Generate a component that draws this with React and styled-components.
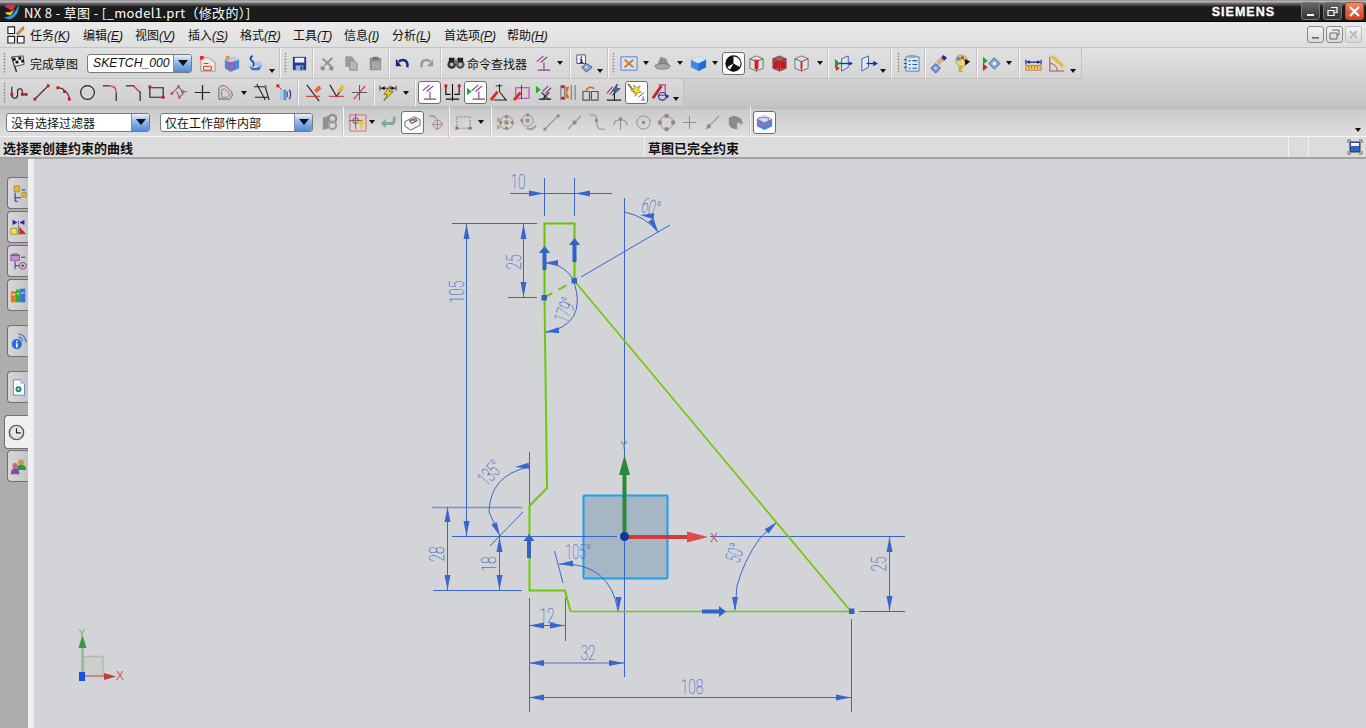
import React from 'react';
import styled, { createGlobalStyle } from 'styled-components';

const Global = createGlobalStyle`
  html, body { margin: 0; padding: 0; height: 100%; overflow: hidden; background: #d2d4d8; }
  #root { height: 100%; }
`;
const CJK = `"Noto Sans CJK SC", "Liberation Sans", sans-serif`;

/* ---------- icon drawing helpers ---------- */
const Ln = ({ d, c = '#222', w = 1, dash }) => <path d={d} stroke={c} strokeWidth={w} fill="none" strokeDasharray={dash} />;
const Fl = ({ d, c, s }) => <path d={d} fill={c} stroke={s || 'none'} strokeWidth={s ? 0.8 : 0} />;
const Dt = ({ x, y, c = '#d01818', r = 1.5 }) => <rect x={x - r} y={y - r} width={r * 2} height={r * 2} fill={c} />;
const G = '#8f8f8f';
const P = '#8a3f8f';

const Perp = ({ x = 0, y = 0, c = P }) => (
  <g transform={`translate(${x} ${y})`}>
    <Ln d="M3 8 L10 2 M7 9 L14 3" c={c} w={1.3} />
    <Ln d="M4 17 H17 M10.5 17 V9" c={c} w={1.2} />
  </g>
);
const Wire = ({ fill = '#e0e0e0', c = '#555', red }) => (
  <g>
    <Fl d="M10 2 L17 5 V15 L10 18 L3 15 V5 Z" c={fill} s={c} />
    <Ln d="M3 5 L10 8 L17 5 M10 8 V18" c={c} />
    {red}
  </g>
);

const icons = {
  flag: <g><Ln d="M5 3 L10 19" c="#223" w={1.4} /><Fl d="M5 3 L17 2 L18 11 L8 13 Z" c="#eee" s="#222" /><Fl d="M6 4h3v3h-3z M12 3h3v3h-3z M9 7h3v3h-3z M15 6h3v3h-3z" c="#111" /></g>,
  sheet: <g><Fl d="M3 4 L11 4 L18 9 V18 H3 Z" c="#f2e8e2" s="#b07070" /><Ln d="M6 13h8v4h-8z M6 10h5" c="#d03030" /><Dt x={4} y={4} c="#e03020" r={2} /></g>,
  box: <g><Fl d="M3 6 L12 3 L18 6 V15 L9 19 L3 15 Z" c="#3f8fe0" /><Fl d="M3 6 L12 3 L18 6 L9 9 Z" c="#a9d4f8" /><Ln d="M7 9h6v6h-6z" c="#e24070" /><Dt x={6} y={4} c="#f09020" r={2} /></g>,
  dish: <g><Fl d="M3 12 Q10 18 17 11 L14 17 H6 Z" c="#2f78c8" /><Ln d="M7 2 Q3 4 6 7 Q10 10 7 13" c="#1b4fa0" w={2} /><Fl d="M9 8 h7 v5 h-7z" c="#9ec8ee" /></g>,
  save: <g><Fl d="M3 3 H17 V17 H3 Z" c="#1c3f92" /><Fl d="M5 4 H15 V9 H5 Z" c="#eef3ff" /><Fl d="M6 12 H14 V17 H6 Z" c="#9cb0d8" /><Fl d="M11 13h2v4h-2z" c="#1c3f92" /></g>,
  cut: <g><Ln d="M5 5 L14 13 M15 4 L7 12" c={G} w={2} /><circle cx="5" cy="15" r="2.4" fill={G} /><circle cx="14" cy="15" r="2.4" fill={G} /></g>,
  copy: <g><Fl d="M4 3 H10 L12 5 V13 H4 Z" c="#a0a0a0" s="#8b8b8b" /><Fl d="M8 7 H13 L16 10 V17 H8 Z" c="#b5b5b5" s="#808080" /></g>,
  paste: <g><Fl d="M4 4 H16 V17 H4 Z" c="#8e8e8e" /><Fl d="M7 3 H13 V6 H7 Z" c="#6f6f6f" /><Fl d="M6 8 H15 V16 H6 Z" c="#a8a8a8" /></g>,
  undo: <g><Ln d="M6 8 Q10 5 13 7 Q16 9 15 14" c="#12287a" w={2.6} /><Fl d="M3 5 L9 13 L3 13 Z" c="#12287a" /></g>,
  redo: <g><Ln d="M14 8 Q10 5 7 7 Q4 9 5 14" c="#9a9a9a" w={2.6} /><Fl d="M17 5 L11 13 L17 13 Z" c="#9a9a9a" /></g>,
  binoc: <g><circle cx="6" cy="11" r="4.5" fill="#333" /><circle cx="15" cy="11" r="4.5" fill="#555" /><Fl d="M3 4h6v5h-6z M12 4h6v5h-6z" c="#222" /><Dt x={10.5} y={8} c="#777" r={2} /><circle cx="6" cy="11" r="2" fill="#bbb" /><circle cx="15" cy="11" r="2" fill="#bbb" /></g>,
  perp: <Perp />,
  info: <g><Fl d="M2 1 H11 V10 H2 Z" c="#fff" s="#224" /><Fl d="M6 2.5h1.6v1.6H6z M5 5h2.6v3.4h1v1H5v-1h1V6H5z" c="#14147a" /><Fl d="M12 10 L18 14 L12 19 L7 14 Z" c="#88a8e0" s="#335" /><Fl d="M11 13h2v2h-2z" c="#eee" /></g>,
  fit: <g><Fl d="M2 3 H19 V17 H2 Z" c="#d3e3f8" s="#3a66c8" /><Ln d="M6 6 L15 14 M15 6 L6 14" c="#e07818" w={2} /></g>,
  lamp: <g><Fl d="M8 3 L14 5 L17 12 L4 13 Z" c="#8e8e8e" /><Fl d="M2 12 Q10 8 18 12 Q18 16 10 16 Q2 16 2 12 Z" c="#a9a9a9" s="#707070" /></g>,
  cube: <g><Fl d="M2 6 L10 2 L18 6 V14 L10 18 L2 14 Z" c="#3a8ee6" /><Fl d="M2 6 L10 2 L18 6 L10 10 Z" c="#d5e8fb" /><Fl d="M10 10 L18 6 V14 L10 18 Z" c="#1e6fc8" /></g>,
  shade: <g><circle cx="10" cy="10" r="8" fill="#fff" stroke="#111" strokeWidth="1.2" /><Fl d="M10 2 A8 8 0 0 0 3 14 L10 10 Z M10 10 L17 14 A8 8 0 0 1 6 17 Z" c="#111" /></g>,
  wire1: <Wire red={<Fl d="M8 6h4v10h-4z" c="#d82020" />} />,
  wire2: <Wire fill="#d05050" c="#444" red={<Fl d="M4 8h5v7h-5z M11 8h5v7h-5z" c="#c81414" />} />,
  wire3: <Wire red={<Fl d="M9 8h2v8h-2z" c="#d82020" />} />,
  sect1: <g><Fl d="M8 5 L15 2 V14 L8 18 Z" c="#dbe8f8" s="#1e3e90" /><Ln d="M2 10 H19" c="#1a2fb0" w={1.4} /><Fl d="M1 5 L6 10 L1 15 Z" c="#1aa03a" /><Fl d="M2 12 L6 15 L2 18 Z" c="#d02020" /><Fl d="M16 8 L20 10 L16 12 Z" c="#1a2fb0" /></g>,
  sect2: <g><Fl d="M3 5 L10 2 V14 L3 18 Z" c="#dbe8f8" s="#1e3e90" /><Ln d="M8 10 H18" c="#1a2fb0" w={1.4} /><Fl d="M15 7 L20 10 L15 13 Z" c="#1a2fb0" /></g>,
  notes: <g><Fl d="M4 3 H18 V18 H4 Z" c="#d8e6f8" s="#3a6cb0" /><Ln d="M7 7h2 M11 7h5 M7 11h2 M11 11h5 M7 15h2 M11 15h5" c="#2a5aa0" w={1.2} /><Ln d="M2 6h3 M2 10h3 M2 14h3" c="#445" w={1.2} /><Fl d="M6 1 h8 v3 h-8z" c="#7ab8a0" /></g>,
  handle: <g><Ln d="M8 10 L15 3" c="#d8ae84" w={5} /><Fl d="M14 1 L18 4 L15 7 L12 4 Z" c="#1e2fa8" /><Fl d="M6 10 L11 15 L6 20 L1 15 Z" c="#7ba0e0" s="#223a88" /><Fl d="M5 14h2v2h-2z" c="#eee" /></g>,
  palette: <g><circle cx="9" cy="7" r="6" fill="#f0d870" stroke="#a08030" strokeWidth=".8" /><Dt x={6} y={5} c="#30a0e0" r={2} /><Dt x={10} y={4} c="#e03030" r={1.5} /><Fl d="M12 5 L18 8 L13 12 Z" c="#111" /><Ln d="M7 12 V19 M7 15 H10 M7 18 H10" c="#d8a820" w={2} /></g>,
  diamond: <g><Fl d="M1 3 L6 7 L1 11 Z" c="#22a035" /><Fl d="M1 10 L6 14 L1 18 Z" c="#d02020" /><Fl d="M13 4 L19 10 L13 16 L7 10 Z" c="#8aa8e0" s="#33508c" /><Dt x={13} y={10} c="#fff" r={1.6} /></g>,
  ruler: <g><Ln d="M2 6 V11 M18 6 V11 M3 8.5 H17" c="#111a9a" w={1.2} /><Fl d="M3 8.5 L6 6.5 V10.5Z M17 8.5 L14 6.5 V10.5Z" c="#111a9a" /><Fl d="M2 12 H18 V17 H2 Z" c="#f0cc60" s="#b06a30" /><Ln d="M5 13v2 M8 13v2 M11 13v2 M14 13v2" c="#a04a20" /></g>,
  protract: <g><Ln d="M3 3 V18 H18" c="#b05050" w={1.1} /><Ln d="M3 10 Q10 10 11 18" c="#b05050" /><Ln d="M5 2 L17 13" c="#e8c868" w={4.5} /><Ln d="M5 2 L17 13" c="#a07828" w={.5} /></g>,
  /* sketch row */
  profile: <g><Ln d="M3 4 V13 Q3 16 6 16 Q9 16 9 13 V9 Q9 6 11.5 6 Q14 6 14 9 V12 H18" w={1.2} /><Dt x={3} y={12} /><Dt x={14} y={12} /><Dt x={18} y={12} /></g>,
  line: <g><Ln d="M3 17 L17 3" w={1.2} /><Dt x={3} y={17} /><Dt x={17} y={3} /></g>,
  arc: <g><Ln d="M3 5 Q8 5 10 8" c="#222" w={1.2} /><Ln d="M10 8 Q15 12 15 17" c="#5a2a90" w={1.4} /><Dt x={3} y={5} /><Dt x={10} y={9} /><Dt x={15} y={17} /></g>,
  circle: <circle cx="10" cy="10" r="7.2" fill="none" stroke="#222" strokeWidth="1.2" />,
  fillet: <g><Ln d="M2 3 H9" w={1.2} /><Ln d="M16 10 V19" w={1.2} /><Ln d="M9 3 Q16 3 16 10" c="#d82020" w={1.3} /><Ln d="M16 3 H10 M16 3 V9" c="#bbb" dash="1 1" /></g>,
  chamfer: <g><Ln d="M2 3 H11" w={1.2} /><Ln d="M17 9 V19" w={1.2} /><Ln d="M10 3 L17 10" c="#d82020" w={1.3} /><Ln d="M12 3 H17 V8" c="#bbb" dash="1 1" /></g>,
  rect: <g><Ln d="M3 5 H17 V15 H3 Z" w={1.2} /><Dt x={3} y={4} /><Dt x={17} y={15} /></g>,
  poly: <g><Ln d="M2 11 L9 4 L14 9 L18 9 M7 9 L10 15 L15 10" c="#777" w={1.2} /><Dt x={2} y={11} c="#b06a50" /><Dt x={9} y={4} c="#b06a50" /><Dt x={10} y={15} c="#b06a50" /><Dt x={13} y={9} c="#b06a50" /></g>,
  plus: <Ln d="M10 2 V18 M2 10 H18" w={1.3} />,
  offset: <g><Fl d="M3 5 Q7 1 11 4 L16 9 Q19 14 14 17 H3 Z" c="none" s="#444" /><Ln d="M6 7 Q9 5 11 8 L14 11 Q15 14 12 15 H6 Z" c="#d05a80" w={1} /></g>,
  trim: <g><Ln d="M2 4 H14 L18 18 M3 15 H18 M5 1 L14 18" w={1.2} /><Dt x={14} y={4} c="#777" /></g>,
  mirror: <g><Dt x={3} y={3} /><Ln d="M3 3 L7 7" c="#d02020" /><Fl d="M6 7 H12 V18 H6 Z" c="#4f94da" /><Fl d="M6 7 H9 V18 H6 Z" c="#a5cdf0" /><Ln d="M15 7 Q18 12 15 17" c="#3040b8" w={1.4} /><Ln d="M13 9 L13 15" c="#d02020" w={1.2} /></g>,
  tr1: <g><Ln d="M3 2 L16 19" w={1.2} /><Ln d="M2 14 H17" c="#d02020" /><Ln d="M12 9 L17 4" c="#e06a40" w={4} /></g>,
  tr2: <g><Ln d="M3 2 L10 14 L16 6" w={1.2} /><Ln d="M2 14 H18" c="#d02020" /><Ln d="M12 9 L17 3" c="#e8c020" w={3.5} /></g>,
  tr3: <g><Ln d="M16 3 L4 17" c="#e03030" w={1.2} /><Ln d="M2 10 H18 M10 2 V18" c="#555" /></g>,
  flash: <g><Ln d="M1 3 V8 M18 3 V8 M2 5.5 H17" /><Fl d="M2 5.5 L6 3.5 V7.5Z M17 5.5 L13 3.5 V7.5Z" c="#111" /><Fl d="M12 3 L5 12 H9 L5 19 L15 9 H11 Z" c="#e8cc30" s="#6a5a10" /></g>,
  perp2: <g><Perp /></g>,
  dimMirror: <g><Ln d="M3 3 V12 H8 M17 3 V12 H12 M10 1 V19 M3 17 H17" c="#111" w={1.2} /><Dt x={3} y={3} /><Dt x={17} y={3} /></g>,
  perpGreen: <g><Fl d="M1 5 L6 9 L1 13 Z" c="#1bb030" /><Perp x={3} /></g>,
  fix: <g><Ln d="M11 1 V9 M5 18 H19 M11 9 L18 18" w={1.1} /><Ln d="M7 3 L14 3" c="#222" /><Ln d="M2 18 L9 9" c="#d83020" w={3} /></g>,
  fix2: <g><Ln d="M4 5 H18 V16 H4 Z" c="#c030c0" w={1.1} /><Ln d="M10 2 V17" c="#3030c0" /><Ln d="M2 18 L9 10" c="#d83020" w={3} /></g>,
  cross: <g><Fl d="M1 3 L6 7 L1 11 Z" c="#1bb030" /><Ln d="M8 9 L14 3 M11 11 L17 5" c={P} w={1.3} /><Ln d="M4 17 H17 M10 17 V12" c="#222" w={1.2} /><Ln d="M7 10 L15 18 M15 10 L7 18" c="#333" w={1.2} /></g>,
  sym: <g><Ln d="M3 2 V18 M7 2 V18 M14 2 V18 M18 2 V18" c="#777" w={1.1} /><Fl d="M8 4 H12 L9.5 10 L12 16 H8 Z" c="#e06a20" /><Dt x={5} y={4} c="#c02020" /><Dt x={5} y={16} c="#c02020" /></g>,
  arch: <g><Ln d="M2 9 H9 V18 H2 Z M11 9 H18 V18 H11 Z" c="#555" w={1.2} /><Ln d="M5 9 Q7 2 14 6" c="#d07020" w={1.6} /></g>,
  bolt: <g><Ln d="M3 18 H18 M11 18 V9" c="#222" w={1.2} /><Ln d="M3 11 L9 4 M6 12 L12 5" c={P} w={1.2} /><Fl d="M14 1 L9 8 H12 L9 13 L17 6 H13 Z" c="#3a7ad0" s="#234" /></g>,
  magic: <g><Ln d="M1 1 L10 12" c="#777" w={2} /><Fl d="M7 2 L10 5 L14 3 L12 7 L15 10 L11 10 L9 14 L8 9 L4 8 L8 6 Z" c="#f0e040" s="#a08a10" /><Ln d="M12 15 L18 10 M15 18 H19 M17 18 V14" c={P} w={1} /></g>,
  geo: <g><Ln d="M9 2 H16 V13 H9" c="#c030a0" w={1.2} /><Ln d="M3 16 L12 3" c="#c02828" w={3} /><circle cx="13" cy="14" r="4" fill="none" stroke="#2030c0" strokeWidth="1.3" /><Dt x={18} y={14} c="#2030c0" /></g>,
  /* selection row */
  gears: <g><Fl d="M3 5 L9 3 V16 L3 18 Z" c="#8f9390" /><circle cx="13" cy="6" r="4" fill="none" stroke="#8a8d8a" strokeWidth="2.2" /><circle cx="13" cy="13" r="4" fill="none" stroke="#9c9c9c" strokeWidth="2.2" /></g>,
  filter: <g><Fl d="M2 2 H19 V19 H2 Z" c="none" s="#cf4f4f" /><Ln d="M8 1 V17 M1 8 H15" c="#667" /><circle cx="8" cy="8" r="3" fill="none" stroke="#b03030" /><Fl d="M9 9 H19 L15 13 V17 H13 V13 Z" c="#eec830" /></g>,
  back: <g><Ln d="M5 11 H13 Q16 11 16 7 V4" c="#7da89d" w={3} /><Fl d="M2 11 L7 6 V16 Z" c="#7da89d" /></g>,
  eye: <g><Fl d="M2 9 L12 4 L18 7 V13 L8 18 L2 14 Z" c="#f4f4f4" s="#2a3f5c" /><Ln d="M7 8 L13 6 L15 8 L9 11 Z" c="#334" /><Fl d="M9 7 H14 V8 H9 Z" c="#d03030" /></g>,
  target: <g><Ln d="M3 4 Q8 1 10 6" c="#999" w={1.6} /><circle cx="12" cy="12" r="4.5" fill="none" stroke="#b08080" /><Ln d="M12 6 V18 M6 12 H18" c="#b08080" /></g>,
  dashed: <g><Ln d="M3 4 H17 V16 H3 Z" c="#777" dash="2 1.5" /><Dt x={3} y={16} c="#a06050" /><Dt x={17} y={16} c="#a06050" /></g>,
  star: <g><Fl d="M1 4 L5 7 L1 10 Z" c="#9aaa90" /><Fl d="M1 12 L5 15 L1 18 Z" c="#b59a90" /><circle cx="11" cy="10" r="7" fill="none" stroke="#8e8e8e" /><Dt x={11} y={4} c="#8a8a8a" /><Dt x={5} y={10} c="#8a8a8a" /><Dt x={17} y={10} c="#8a8a8a" /><Dt x={11} y={16} c="#8a8a8a" /><Dt x={11} y={10} c="#b0905a" r={2.2} /></g>,
  orbit: <g><circle cx="9" cy="8" r="6" fill="none" stroke="#8e8e8e" /><Dt x={9} y={8} c="#b09060" r={2} /><Dt x={9} y={2} c="#8a8a8a" /><Dt x={3} y={8} c="#8a8a8a" /><Ln d="M8 16 Q14 19 18 13" c="#8aa8a0" w={2} /></g>,
  gLine: <g><Ln d="M3 17 L17 3" c="#8e8e8e" w={1.1} /><Dt x={3} y={17} c="#a58075" /><Dt x={17} y={3} c="#a58075" /></g>,
  gMid: <g><Ln d="M3 17 L17 3" c="#8e8e8e" w={1.1} /><Dt x={10} y={10} c="#a58075" r={2} /></g>,
  gCurve: <g><Ln d="M2 2 H7 Q9 2 9 8 Q9 17 14 17 H18" c="#8e8e8e" w={1.1} /><Dt x={9} y={8} c="#a58075" /></g>,
  gTan: <g><Ln d="M10 7 V18 M3 13 Q3 7 10 7 Q17 7 17 13" c="#8e8e8e" w={1.1} /><Dt x={10} y={6} c="#a58075" /></g>,
  gCirc: <g><circle cx="10" cy="10" r="7" fill="none" stroke="#8e8e8e" /><Dt x={10} y={10} c="#a58075" /></g>,
  gQuad: <g><circle cx="10" cy="10" r="7" fill="none" stroke="#8e8e8e" /><Dt x={10} y={3} c="#a58075" r={2} /><Dt x={3} y={10} c="#a58075" r={2} /><Dt x={17} y={10} c="#a58075" r={2} /><Dt x={10} y={17} c="#a58075" r={2} /></g>,
  gPlus: <Ln d="M10 3 V17 M3 10 H17" c="#8e8e8e" w={1.1} />,
  gNear: <g><Ln d="M3 17 L17 3" c="#8e8e8e" w={1.1} /><Dt x={6} y={14} c="#a58075" r={2} /></g>,
  gFace: <g><Fl d="M3 5 Q10 1 16 6 L18 12 L12 10 L12 17 Q5 17 3 12 Z" c="#8b8b8b" /><Fl d="M12 10 L18 12 L12 17 Z" c="#d0d0d0" /></g>,
  view: <g><Fl d="M2 6 L10 2 L18 6 V14 L10 18 L2 14 Z" c="#3a8ee6" /><Fl d="M2 6 L10 2 L18 6 L10 10 Z" c="#c8e0f8" /><Ln d="M4 5 H14 V12 H4 Z" c="#e06070" /></g>,
  /* rail */
  rTree: <g><Fl d="M5 1 H11 V8 H5 Z" c="#e8b830" s="#a07818" /><Fl d="M14 9 H19 V14 H14 Z" c="#e8b830" s="#a07818" /><Ln d="M6 9 V19 M6 15 H13 M6 19 H9 M14 6 H18" c="#1e2fa8" w={1.2} /></g>,
  rMirror: <g><Fl d="M1 11 H8 V18 H1 Z" c="#f0e050" s="#8a7a20" /><Fl d="M11 18 L19 18 L11 9 Z" c="#d02828" /><Ln d="M10 2 V19" c="#333" dash="1.5 1" /><Fl d="M3 1 L9 4 L3 7 Z M17 1 L11 4 L17 7 Z" c="#1e2fa8" /></g>,
  rAsm: <g><ellipse cx="6" cy="3" rx="5" ry="2" fill="#c890c8" stroke="#8a2a8a" /><Fl d="M1 3 H11 V9 H1 Z" c="#c890c8" s="#8a2a8a" /><Ln d="M6 10 V19 M6 15 H11 M13 5 H18" c="#1e2fa8" w={1.1} /><circle cx="15" cy="15" r="4" fill="none" stroke="#9a2a7a" /><circle cx="15" cy="15" r="1.5" fill="#9a2a7a" /></g>,
  rBooks: <g><Fl d="M1 5 H7 V18 H1 Z" c="#e87818" /><Fl d="M7 3 H12 V18 H7 Z" c="#30b030" /><Fl d="M12 2 H18 V18 H12 Z" c="#2f78d8" /><Ln d="M2 9 H6 M8 8 H11 M13 7 H17" c="#fff" /></g>,
  rInfo: <g><Ln d="M10 5 Q14 5 15 10 M10 1 Q18 2 19 11" c="#3a78d8" w={1.5} /><circle cx="8" cy="13" r="6" fill="#1e70d8" /><Fl d="M7 9 h2 v2 h-2z M7 12 h2 v5 h-2z" c="#fff" /></g>,
  rDoc: <g><Fl d="M4 1 H12 L17 6 V19 H4 Z" c="#fff" s="#2060d0" /><Fl d="M12 1 V6 H17 Z" c="#b0c8f0" /><circle cx="10" cy="12" r="3.5" fill="#208a70" /><Dt x={10} y={12} c="#fff" r={1} /></g>,
  rClock: <g><circle cx="10" cy="10" r="8.5" fill="#c8d2e0" stroke="#4a4f5a" strokeWidth="1.4" /><circle cx="10" cy="10" r="6" fill="#e4e9f0" /><Ln d="M10 5 V10.5 H15" c="#222" w={1.4} /></g>,
  rUsers: <g><circle cx="13" cy="5" r="3.5" fill="#c89a50" /><Fl d="M8 14 Q8 8 13 8 Q19 8 19 14 Z" c="#2a9a40" /><circle cx="6" cy="9" r="3.2" fill="#b87070" /><Fl d="M1 19 Q1 12 6 12 Q11 12 11 19 Z" c="#8a44b0" /></g>,
};

/* ---------- title bar ---------- */
const TitleBar = styled.header`
  height: 22px; display: flex; align-items: center; color: #fff; box-sizing: border-box;
  background: linear-gradient(#6a6a6a 0, #c8c8c8 1px, #5a5a5a 4px, #1b1b1b 7px, #1b1b1b 21px, #000 21px);
`;
const Logo = styled.svg` width: 18px; height: 18px; margin-left: 3px; flex: none; `;
const TitleText = styled.span`
  margin-left: 3px; padding-top: 2px; font: 13px ${CJK}; letter-spacing: .35px; white-space: pre; flex: 1;
`;
const Brand = styled.span`
  font: bold 12.5px "Liberation Sans", sans-serif; letter-spacing: 1px; margin-right: 26px; padding-top: 2px;
  -webkit-text-stroke: .3px #fff;
`;
const WinBtn = styled.button`
  width: ${p => p.$w || 19}px; height: 18px; padding: 0; margin-right: ${p => p.$mr}px; border-radius: 3px;
  border: 1px solid ${p => (p.$close ? '#b05030' : '#777')}; display: flex; align-items: center; justify-content: center;
  background: ${p => (p.$close ? 'linear-gradient(#f08a60, #d8401c)' : 'linear-gradient(#666, #333)')};
`;
const Glyph = styled.svg` width: 13px; height: 13px; `;

/* ---------- menu ---------- */
const MenuBar = styled.nav`
  height: 26px; display: flex; align-items: center; box-sizing: border-box;
  background: linear-gradient(#e9e9e9, #dfdfdf); border-bottom: 1px solid #c4c4c4;
  padding-left: 6px;
`;
const MenuIcon = styled.svg` width: 19px; height: 19px; flex: none; margin-right: 5px; `;
const MenuItem = styled.span`
  font: 12px ${CJK}; color: #111; width: ${p => p.$w}px; flex: none; white-space: nowrap;
  i { font: italic 12px "Liberation Sans", sans-serif; }
  u { text-decoration: underline; }
`;
const MdiGroup = styled.div` margin-left: auto; margin-right: 4px; display: flex; gap: 2px; `;
const MdiBtn = styled.button`
  width: 17px; height: 17px; padding: 0; border-radius: 3px; border: 1px solid ${p => (p.$off ? '#bbb' : '#888')};
  background: linear-gradient(#f4f4f4, #d8d8d8); display: flex; align-items: center; justify-content: center;
`;

/* ---------- toolbars ---------- */
const ToolRows = styled.div` background: linear-gradient(#e2e2e2, #c3c3c3); `;
const Row = styled.div`
  height: ${p => p.$h}px; display: flex; box-sizing: border-box;
`;
const Group = styled.div`
  display: flex; align-items: center; flex: none; box-sizing: border-box;
  width: ${p => p.$w}px; padding-left: 1px;
  background: ${p => p.$bg}; border-right: 1px solid #c2c2c2; border-bottom: 1px solid #c2c2c2;
`;
const SelectRow = styled.div`
  height: 30px; display: flex; align-items: center; box-sizing: border-box; padding-left: 6px; position: relative;
  background: linear-gradient(#b9b9b9 0, #cbcbcb 3px, #dedede 29px, #f4f4f4 29px);
`;
const Tool = styled.div`
  width: ${p => p.$w || 23}px; height: 23px; flex: none; display: flex; align-items: center; justify-content: center;
  box-sizing: border-box;
  ${p => p.$sel && 'background: #fff; border: 1px solid #6e6e6e; border-radius: 3px;'}
`;
const ToolIcon = styled.svg` width: 19px; height: 19px; flex: none; `;
const Caret = styled.div`
  width: ${p => p.$w}px; flex: none; height: 100%; display: flex; justify-content: center; align-items: ${p => (p.$low ? 'flex-end' : 'center')};
  padding-bottom: ${p => (p.$low ? 5 : 0)}px; box-sizing: border-box;
  &::after { content: ''; border: 3.5px solid transparent; border-top: 4px solid #111; border-bottom: 0; }
`;
const Sep = styled.div`
  width: ${p => p.$w}px; flex: none; height: 100%; display: flex; justify-content: center;
  &::after { content: ''; width: 1px; height: 100%; background: #f6f6f6; box-shadow: -1px 0 #c4c4c4; }
`;
const Grip = styled.div`
  width: ${p => p.$w}px; flex: none; height: 22px; position: relative;
  background: radial-gradient(circle, #8c8c8c 0.8px, transparent 1.1px) center top / 3px 3px repeat-y;
`;
const Gap = styled.div` width: ${p => p.$w}px; flex: none; `;
const Label = styled.span`
  font: 12px ${CJK}; color: #111; flex: none; width: ${p => p.$w}px; margin-left: ${p => p.$ml || 0}px; white-space: nowrap;
`;
const Combo = styled.div`
  width: ${p => p.$w}px; height: 19px; flex: none; box-sizing: border-box; display: flex; align-items: center;
  background: #fff; border: 1px solid #7a7a7a; border-radius: 3px; overflow: hidden; margin-right: ${p => p.$mr || 0}px;
  span { flex: 1; padding-left: ${p => p.$pad || 4}px; font: ${p => (p.$ital ? 'italic 12.2px "Liberation Sans", sans-serif' : `12px ${CJK}`)}; color: #111; white-space: nowrap; }
`;
const ComboBtn = styled.div`
  width: 17px; height: 100%; flex: none; display: flex; align-items: center; justify-content: center;
  background: linear-gradient(#eaf2fc, #8fb8ea 45%, #4f8ad8); border-left: 1px solid #88a;
  &::after { content: ''; border: 5px solid transparent; border-top: 6px solid #111; border-bottom: 0; }
`;
const Overflow = styled.div`
  position: absolute; right: 5px; bottom: 5px; border: 3.5px solid transparent; border-top: 4px solid #111; border-bottom: 0;
`;

/* ---------- status bar ---------- */
const StatusBar = styled.div`
  height: 22px; display: flex; align-items: center; box-sizing: border-box;
  background: #dcdcdc; border-bottom: 2px solid #a4a4a4;
`;
const StatusCell = styled.div`
  width: ${p => p.$w}px; flex: none; height: 100%; box-sizing: border-box; padding-left: 3px;
  font: bold 13px ${CJK}; color: #111; line-height: 19px; white-space: nowrap;
  border-right: 1px solid #f2f2f2; display: flex; align-items: center;
`;
const StatusIcon = styled.svg` width: 16px; height: 16px; margin-left: 38px; `;

/* ---------- main ---------- */
const Main = styled.main` height: 569px; display: flex; `;
const Rail = styled.aside`
  width: 28px; flex: none; background: #adadad; padding-top: 18px; box-sizing: border-box;
  display: flex; flex-direction: column; align-items: flex-end;
`;
const RailTab = styled.div`
  box-sizing: border-box; flex: none; display: flex; align-items: center; justify-content: center;
  width: ${p => (p.$active ? 24 : 21)}px; height: ${p => (p.$active ? 34 : 32)}px;
  margin-top: ${p => p.$mt || 0}px;
  background: ${p => (p.$active ? '#f0f0f0' : 'linear-gradient(90deg, #d8d8d8, #c4c4c4)')};
  border: 1px solid #717171; border-right: 0; border-radius: 4px 0 0 4px;
  svg { width: 17px; height: 17px; flex: none; }
`;
const Strip = styled.div` width: 6px; flex: none; background: #f0f0f0; `;
const Canvas = styled.section` flex: 1; background: #d2d4d8; overflow: hidden; `;
const Sketch = styled.svg` display: block; width: 100%; height: 100%; `;
const DimText = styled.text`
  font-family: Roboto, "Liberation Sans", sans-serif; font-weight: 100; font-size: 21px; fill: #3a66cc;
  text-anchor: middle; dominant-baseline: central; stroke: #3a66cc; stroke-width: .15;
`;
const AxisText = styled.text`
  font-family: "Liberation Sans", sans-serif; font-size: ${p => p.$s}px; fill: ${p => p.$c}; text-anchor: middle; dominant-baseline: central;
`;

/* ---------- toolbar data: [kind, value, width] ---------- */
const row1 = [
  ['g', 6], ['t', 'flag', 19], ['l', '完成草图', 48, 4], ['x', 9], ['c', 'SKETCH_000', 105], ['x', 3],
  ['t', 'sheet', 24], ['t', 'box', 24], ['t', 'dish', 24], ['m', 10], ['s', 6], ['g', 4],
  ['t', 'save', 24], ['s', 5], ['t', 'cut', 23], ['t', 'copy', 24], ['t', 'paste', 24], ['s', 4],
  ['t', 'undo', 23], ['t', 'redo', 24], ['s', 6], ['t', 'binoc', 22], ['l', '命令查找器', 60, 1], ['x', 5],
  ['t', 'perp', 22], ['a', 12], ['s', 8], ['t', 'info', 20], ['m', 12], ['s', 4], ['g', 6],
  ['t', 'fit', 24], ['a', 12], ['t', 'lamp', 20], ['a', 16], ['t', 'cube', 20], ['a', 14],
  ['T', 'shade', 23], ['t', 'wire1', 23], ['t', 'wire2', 22], ['t', 'wire3', 23], ['a', 13], ['s', 4],
  ['t', 'sect1', 26], ['t', 'sect2', 24], ['m', 6], ['s', 10], ['g', 4],
  ['t', 'notes', 22], ['s', 6], ['t', 'handle', 22], ['t', 'palette', 24], ['s', 6],
  ['t', 'diamond', 22], ['a', 14], ['s', 6], ['t', 'ruler', 22], ['t', 'protract', 24], ['m', 10],
];
const row2 = [
  ['g', 6],
  ...['profile', 'line', 'arc', 'circle', 'fillet', 'chamfer', 'rect', 'poly', 'plus', 'offset'].map(n => ['t', n, 23]),
  ['a', 13], ['t', 'trim', 23], ['t', 'mirror', 22], ['s', 6], ['t', 'tr1', 24], ['t', 'tr2', 23], ['t', 'tr3', 23], ['s', 6],
  ['t', 'flash', 22], ['a', 13], ['s', 6],
  ['T', 'perp2', 23], ['t', 'dimMirror', 23], ['T', 'perpGreen', 23], ['t', 'fix', 23], ['t', 'fix2', 23], ['t', 'cross', 23],
  ['t', 'sym', 23], ['t', 'arch', 23], ['t', 'bolt', 23], ['T', 'magic', 23], ['t', 'geo', 23], ['m', 10],
];
const row3 = [
  ['c2', '没有选择过滤器', 144, 10], ['c2', '仅在工作部件内部', 153, 5],
  ['t', 'gears', 22], ['s', 6], ['t', 'filter', 22], ['a', 8], ['t', 'back', 25], ['T', 'eye', 23], ['t', 'target', 22], ['s', 6],
  ['t', 'dashed', 22], ['a', 14], ['s', 6],
  ...['star', 'orbit', 'gLine', 'gMid', 'gCurve', 'gTan', 'gCirc', 'gQuad', 'gPlus', 'gNear', 'gFace'].map(n => ['t', n, 23]),
  ['s', 6], ['T', 'view', 23],
];

const renderItem = ([k, v, w, extra], i) => {
  switch (k) {
    case 'g': return <Grip key={i} $w={v} />;
    case 's': return <Sep key={i} $w={v} />;
    case 'x': return <Gap key={i} $w={v} />;
    case 'a': return <Caret key={i} $w={v} />;
    case 'm': return <Caret key={i} $w={v} $low />;
    case 'l': return <Label key={i} $w={w} $ml={extra}>{v}</Label>;
    case 'c': return <Combo key={i} $w={w} $ital $pad={5}><span>{v}</span><ComboBtn /></Combo>;
    case 'c2': return <Combo key={i} $w={w} $mr={extra}><span>{v}</span><ComboBtn /></Combo>;
    default:
      return (
        <Tool key={i} $w={w} $sel={k === 'T'}>
          <ToolIcon viewBox="0 0 20 20">{icons[v]}</ToolIcon>
        </Tool>
      );
  }
};

const menus = [
  ['任务', 'K', 53], ['编辑', 'E', 52], ['视图', 'V', 53], ['插入', 'S', 52], ['格式', 'R', 53],
  ['工具', 'T', 51], ['信息', 'I', 48], ['分析', 'L', 52], ['首选项', 'P', 63], ['帮助', 'H', 45],
];

/* ---------- sketch helpers ---------- */
const BLUE = '#3a66cc';
const Head = ({ x, y, a, l = 15, w = 6, c = BLUE }) => (
  <polygon points={`0,0 ${-l},${-w / 2} ${-l},${w / 2}`} fill={c} transform={`translate(${x} ${y}) rotate(${a})`} />
);
const Dim = ({ x, y, r = 0, sx = .66, children }) => (
  <DimText transform={`translate(${x} ${y}) rotate(${r}) scale(${sx} 1)`}>{children}</DimText>
);
const Thick = ({ x, y, a, len = 24 }) => (
  <g transform={`translate(${x} ${y}) rotate(${a})`}>
    <rect x={-len} y={-2} width={len - 5} height={4} fill="#2f63c4" />
    <polygon points={`0,0 -7,-5.5 -7,5.5`} fill="#2f63c4" />
  </g>
);
const B = ({ d, o = 1, w = 1 }) => <path d={d} stroke={BLUE} strokeWidth={w} fill="none" opacity={o} />;

const Drawing = () => (
  <Sketch viewBox="34 159 1332 569" preserveAspectRatio="xMinYMin meet">
    {/* datum square */}
    <rect x="583.5" y="495.5" width="84" height="83" rx="1" fill="#a7b6c4" stroke="#1aa0f0" strokeWidth="2" />

    {/* dimension lines */}
    <B d="M624.5 198 V677" />
    <B d="M452 536.5 H617 M710 536.5 H905" />
    <B d="M544.5 178 V216 M574.5 178 V216" />
    <B d="M510 193.5 H612" />
    <Head x={544} y={193.5} a={0} /><Head x={575} y={193.5} a={180} />
    <Dim x={518} y={181}>10</Dim>

    <B d="M581 277 L670 225" />
    <B d="M624 212 Q645 216 658 232" />
    <Head x={640} y={215} a={185} l={14} /><Head x={658} y={232} a={60} l={14} />
    <Dim x={651} y={207} r={15} sx={.6}>60°</Dim>

    <B d="M452 223.5 H537 M508 297.5 H537" />
    <B d="M523.5 223 V297" />
    <Head x={523.5} y={224} a={-90} /><Head x={523.5} y={297} a={90} />
    <Dim x={513} y={262} r={-90}>25</Dim>

    <B d="M466.5 224 V536" />
    <Head x={466.5} y={224} a={-90} /><Head x={466.5} y={536} a={90} />
    <Dim x={456} y={292} r={-90}>105</Dim>

    <B d="M432 507.5 H522" o={.6} w={1.5} /><B d="M433 590.5 H522" />
    <B d="M447.5 507 V590" />
    <Head x={447.5} y={507} a={-90} /><Head x={447.5} y={590} a={90} />
    <Dim x={436} y={554} r={-90}>28</Dim>

    <B d="M499.5 537 V590" />
    <Head x={499.5} y={537} a={-90} /><Head x={499.5} y={590} a={90} />
    <Dim x={488} y={564} r={-90}>18</Dim>

    <B d="M529.5 452 V505 M529.5 598 V712" />
    <B d="M529 467 Q490 475 489 512 L500 536" />
    <Head x={515} y={467} a={175} l={14} /><Head x={500} y={536} a={65} l={14} />
    <B d="M490 546 L523 512" />
    <Dim x={490} y={473} r={-48} sx={.6}>135°</Dim>

    <B d="M554.5 551 L563 583" />
    <B d="M559 564 Q610 562 618 611" />
    <Head x={559} y={564} a={178} l={14} /><Head x={618.5} y={611} a={90} l={14} />
    <Dim x={578} y={552} sx={.6}>105°</Dim>

    <B d="M565.5 598 V641" />
    <B d="M530 625.5 H565" />
    <Head x={529} y={625.5} a={180} /><Head x={565} y={625.5} a={0} />
    <Dim x={547} y={615}>12</Dim>

    <B d="M529 663 H624" o={.6} w={1.5} />
    <Head x={529} y={663} a={180} /><Head x={624} y={663} a={0} />
    <Dim x={588} y={652}>32</Dim>

    <B d="M529 697.5 H851" />
    <Head x={529} y={697.5} a={180} /><Head x={851} y={697.5} a={0} />
    <Dim x={692} y={686}>108</Dim>
    <B d="M851.5 619 V712" />

    <B d="M889.5 537 V611" />
    <B d="M859 611.5 H905" />
    <Head x={889.5} y={537} a={-90} /><Head x={889.5} y={611} a={90} />
    <Dim x={878} y={564} r={-90}>25</Dim>

    <B d="M735 610 L737 586 Q744 560 760 538 L777 522" />
    <Head x={735} y={611} a={90} l={14} /><Head x={777} y={522} a={-42} l={14} />
    <Dim x={735} y={553} r={-70} sx={.6}>50°</Dim>

    {/* arcs near the top nodes */}
    <B d="M550 263 Q565 266 574 280" />
    <Head x={544} y={263} a={180} l={14} />
    <B d="M574 282 Q588 325 544 333" />
    <Head x={545} y={332} a={173} l={14} />
    <Dim x={565} y={310} r={-68} sx={.6}>179°</Dim>

    {/* sketch curves */}
    <path d="M544.5 297 V223.5 H574.5 V281" fill="none" stroke="#66c400" strokeWidth="2" />
    <path d="M544.5 297 L547 488 L529.5 506 V590.5 H565 L570.5 611.5" fill="none" stroke="#6fc80a" strokeWidth="2" />
    <path d="M570.5 611.5 H851 L574.5 281" fill="none" stroke="#6fc80a" strokeWidth="1.7" />
    <path d="M544.5 297.5 L574 281" stroke="#6fc80a" strokeWidth="2" strokeDasharray="9 7" />
    <Thick x={544.5} y={246} a={-90} />
    <Thick x={574.5} y={238} a={-90} />
    <Thick x={529} y={534} a={-90} />
    <Thick x={726} y={611.5} a={0} />
    <rect x="541.5" y="295" width="5.5" height="5.5" fill="#2f63c4" />
    <rect x="571.5" y="278" width="5.5" height="5.5" fill="#2f63c4" />
    <rect x="849" y="608.5" width="5.5" height="5.5" fill="#2f63c4" />

    {/* work coordinate system */}
    <rect x="622.5" y="470" width="4" height="67" fill="#2a8a3a" />
    <polygon points="624.5,455 630,475 619,475" fill="#2a8a3a" />
    <rect x="624" y="535" width="65" height="4" fill="#d03a3a" />
    <polygon points="708,537 687,531.5 687,542.5" fill="#e04a4a" />
    <circle cx="624.5" cy="536.5" r="4.5" fill="#10389c" />
    <AxisText x={624} y={445} $s={11} $c="#5a9a5a">Y</AxisText>
    <AxisText x={714} y={537.5} $s={12} $c="#d05050">X</AxisText>

    {/* small triad */}
    <rect x="83.5" y="656.5" width="19.5" height="20" fill="#ccd0cc" stroke="#b5b9b5" strokeWidth="1.5" />
    <rect x="81" y="640" width="3" height="36" fill="#9cbd9c" />
    <polygon points="82.5,635 86.5,648 78.5,648" fill="#3a9a3a" />
    <rect x="84" y="675" width="22" height="2" fill="#c98a8a" />
    <polygon points="116,676.5 104,673 104,680" fill="#c83a3a" />
    <rect x="79" y="672" width="6" height="9" fill="#1a50e0" />
    <AxisText x={82} y={635} $s={11} $c="#80b080" dy="-2">Y</AxisText>
    <AxisText x={120} y={676} $s={12} $c="#d05a5a">X</AxisText>
  </Sketch>
);

export default function App() {
  return (
    <>
      <Global />
      <TitleBar>
        <Logo viewBox="0 0 18 18">
          <path d="M1 4 Q8 1 13 4 L9 9 Z" fill="#d8304a" />
          <path d="M1 15 Q9 16 14 6 L16 3 Q16 13 8 17 Q4 18 1 15 Z" fill="#2a9be0" />
          <path d="M2 10 Q8 11 12 7 L8 13 Q4 14 2 10 Z" fill="#f0c030" />
        </Logo>
        <TitleText>NX 8 - 草图 - [_model1.prt（修改的）]</TitleText>
        <Brand>SIEMENS</Brand>
        <WinBtn $mr={3}><Glyph viewBox="0 0 13 13"><rect x="3" y="9" width="7" height="2" fill="#fff" /></Glyph></WinBtn>
        <WinBtn $mr={3}><Glyph viewBox="0 0 13 13"><path d="M5 2.5h6v5h-2 M2 5.5h6v5H2z" fill="none" stroke="#fff" strokeWidth="1.2" /></Glyph></WinBtn>
        <WinBtn $mr={2} $close><Glyph viewBox="0 0 13 13"><path d="M2 2 L11 11 M11 2 L2 11" stroke="#fff" strokeWidth="2.2" /></Glyph></WinBtn>
      </TitleBar>

      <MenuBar>
        <MenuIcon viewBox="0 0 20 20">
          <path d="M2 2 H9 V9 H2 Z M2 12 H9 V19 H2 Z M12 12 H19 V19 H12 Z" fill="#fff" stroke="#222" strokeWidth="1.2" />
          <path d="M11 9 L18 2 L19 4 L13 10 Z" fill="#e8b030" stroke="#a03030" strokeWidth=".8" />
        </MenuIcon>
        {menus.map(([t, k, w]) => (
          <MenuItem key={k} $w={w}>{t}<i>(<u>{k}</u>)</i></MenuItem>
        ))}
        <MdiGroup>
          <MdiBtn><Glyph viewBox="0 0 13 13"><rect x="3" y="9" width="7" height="1.6" fill="#666" /></Glyph></MdiBtn>
          <MdiBtn><Glyph viewBox="0 0 13 13"><path d="M4 2h7v5h-2 M2 5h7v6H2z" fill="none" stroke="#666" /></Glyph></MdiBtn>
          <MdiBtn $off><Glyph viewBox="0 0 13 13"><path d="M3 3 L10 10 M10 3 L3 10" stroke="#bbb" strokeWidth="2" /></Glyph></MdiBtn>
        </MdiGroup>
      </MenuBar>

      <ToolRows>
        <Row $h={31}>
          <Group $w={1082} $bg="linear-gradient(#e0e0e0, #d6d6d6)">{row1.map(renderItem)}</Group>
        </Row>
        <Row $h={28}>
          <Group $w={684} $bg="linear-gradient(#dadada, #cecece)">{row2.map(renderItem)}</Group>
        </Row>
      </ToolRows>

      <SelectRow>
        {row3.map(renderItem)}
        <Overflow />
      </SelectRow>

      <StatusBar>
        <StatusCell $w={645}>选择要创建约束的曲线</StatusCell>
        <StatusCell $w={644}>草图已完全约束</StatusCell>
        <StatusCell $w={20} />
        <StatusIcon viewBox="0 0 16 16">
          <path d="M1 4V1H4 M12 1H15V4 M15 12V15H12 M4 15H1V12" fill="none" stroke="#666" />
          <rect x="3" y="3" width="10" height="10" fill="#2a68c8" stroke="#333" />
          <rect x="4" y="4" width="8" height="3" fill="#fff" />
        </StatusIcon>
      </StatusBar>

      <Main>
        <Rail>
          <RailTab><svg viewBox="0 0 20 20">{icons.rTree}</svg></RailTab>
          <RailTab $mt={2}><svg viewBox="0 0 20 20">{icons.rMirror}</svg></RailTab>
          <RailTab $mt={2}><svg viewBox="0 0 20 20">{icons.rAsm}</svg></RailTab>
          <RailTab $mt={2}><svg viewBox="0 0 20 20">{icons.rBooks}</svg></RailTab>
          <RailTab $mt={14}><svg viewBox="0 0 20 20">{icons.rInfo}</svg></RailTab>
          <RailTab $mt={14}><svg viewBox="0 0 20 20">{icons.rDoc}</svg></RailTab>
          <RailTab $mt={12} $active><svg viewBox="0 0 20 20">{icons.rClock}</svg></RailTab>
          <RailTab $mt={1}><svg viewBox="0 0 20 20">{icons.rUsers}</svg></RailTab>
        </Rail>
        <Strip />
        <Canvas><Drawing /></Canvas>
      </Main>
    </>
  );
}
